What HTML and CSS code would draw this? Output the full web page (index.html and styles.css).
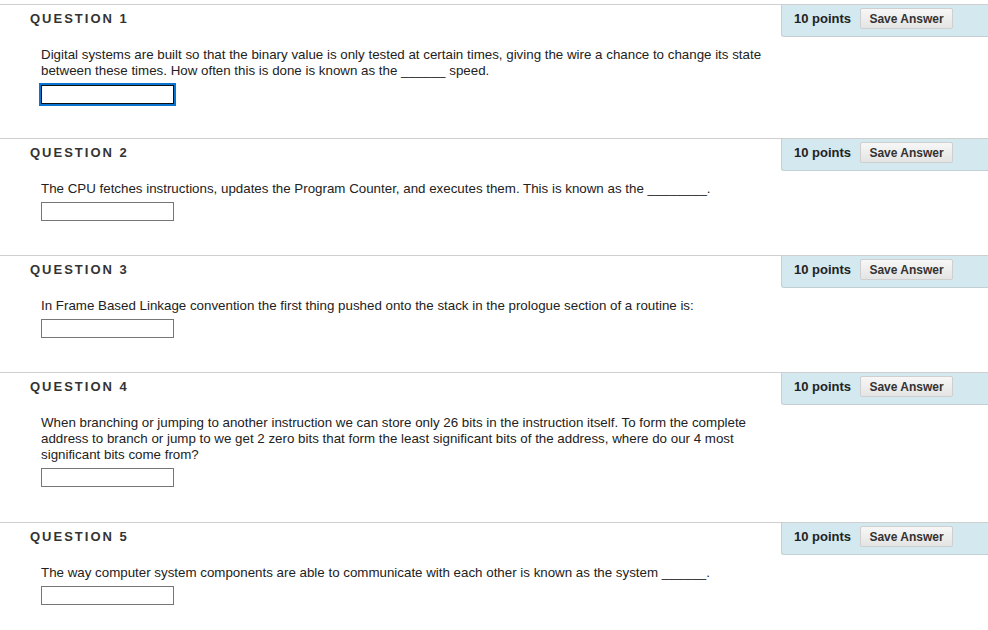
FILE: index.html
```html
<!DOCTYPE html>
<html>
<head>
<meta charset="utf-8">
<link rel="stylesheet" href="styles.css">
</head>
<body>
<div class="page">
  <div class="question">
    <div class="q-head">
      <h3 class="q-title">QUESTION 1</h3>
      <div class="points"><span class="pts">10 points</span><button class="save">Save Answer</button></div>
    </div>
    <div class="q-body">
      <p class="q-text">Digital systems are built so that the binary value is only tested at certain times, giving the wire a chance to change its state between these times. How often this is done is known as the ______ speed.</p>
      <input class="answer focused" type="text">
    </div>
  </div>
  <div class="question">
    <div class="q-head">
      <h3 class="q-title">QUESTION 2</h3>
      <div class="points"><span class="pts">10 points</span><button class="save">Save Answer</button></div>
    </div>
    <div class="q-body">
      <p class="q-text">The CPU fetches instructions, updates the Program Counter, and executes them. This is known as the ________.</p>
      <input class="answer" type="text">
    </div>
  </div>
  <div class="question">
    <div class="q-head">
      <h3 class="q-title">QUESTION 3</h3>
      <div class="points"><span class="pts">10 points</span><button class="save">Save Answer</button></div>
    </div>
    <div class="q-body">
      <p class="q-text">In Frame Based Linkage convention the first thing pushed onto the stack in the prologue section of a routine is:</p>
      <input class="answer" type="text">
    </div>
  </div>
  <div class="question q-tall">
    <div class="q-head">
      <h3 class="q-title">QUESTION 4</h3>
      <div class="points"><span class="pts">10 points</span><button class="save">Save Answer</button></div>
    </div>
    <div class="q-body">
      <p class="q-text">When branching or jumping to another instruction we can store only 26 bits in the instruction itself. To form the complete address to branch or jump to we get 2 zero bits that form the least significant bits of the address, where do our 4 most significant bits come from?</p>
      <input class="answer" type="text">
    </div>
  </div>
  <div class="question">
    <div class="q-head">
      <h3 class="q-title">QUESTION 5</h3>
      <div class="points"><span class="pts">10 points</span><button class="save">Save Answer</button></div>
    </div>
    <div class="q-body">
      <p class="q-text">The way computer system components are able to communicate with each other is known as the system ______.</p>
      <input class="answer" type="text">
    </div>
  </div>
</div>
</body>
</html>
```

FILE: styles.css
```css
html, body {
  margin: 0;
  padding: 0;
  background: #fff;
}
body {
  font-family: "Liberation Sans", Arial, sans-serif;
  font-size: 13px;
  color: #222;
}
.page {
  padding-top: 4px;
}
.question {
  border-top: 1px solid #cfcfcf;
  padding-bottom: 34px;
}
.q-head {
  display: flex;
  align-items: flex-start;
  justify-content: space-between;
}
.q-title {
  margin: 0;
  padding: 6px 0 0 30px;
  font-size: 13px;
  line-height: 16px;
  font-weight: bold;
  letter-spacing: 2px;
  color: #333;
}
.points {
  box-sizing: border-box;
  width: 207px;
  height: 32px;
  display: flex;
  align-items: flex-start;
  gap: 9px;
  padding: 3px 0 0 12px;
  background: #d3e8ef;
  border-left: 1px solid #c4cfd3;
  border-bottom: 1px solid #c4cfd3;
  border-bottom-left-radius: 3px;
}
.pts {
  font-weight: bold;
  font-size: 13px;
  line-height: 16px;
  padding-top: 3px;
  color: #222;
}
.save {
  box-sizing: border-box;
  height: 21px;
  width: 93px;
  margin: 0;
  padding: 0;
  font-family: "Liberation Sans", Arial, sans-serif;
  font-size: 12px;
  font-weight: bold;
  color: #333;
  background: linear-gradient(#f7f7f7, #e4e4e4);
  border: 1px solid #cfcfcf;
  border-radius: 2px;
}
.q-body {
  padding: 10px 0 0 41px;
}
.q-text {
  margin: 0;
  max-width: 740px;
  font-size: 13.33px;
  line-height: 16px;
  color: #222;
}
.answer {
  display: block;
  box-sizing: border-box;
  width: 133px;
  height: 19px;
  margin-top: 5px;
  padding: 0;
  border: 1px solid #767676;
  border-radius: 0;
  background: #fff;
}
.answer.focused {
  margin-top: 6px;
  border-color: #111;
  outline: 2px solid #0a74d2;
}
.q-tall {
  padding-bottom: 35px;
}
```
